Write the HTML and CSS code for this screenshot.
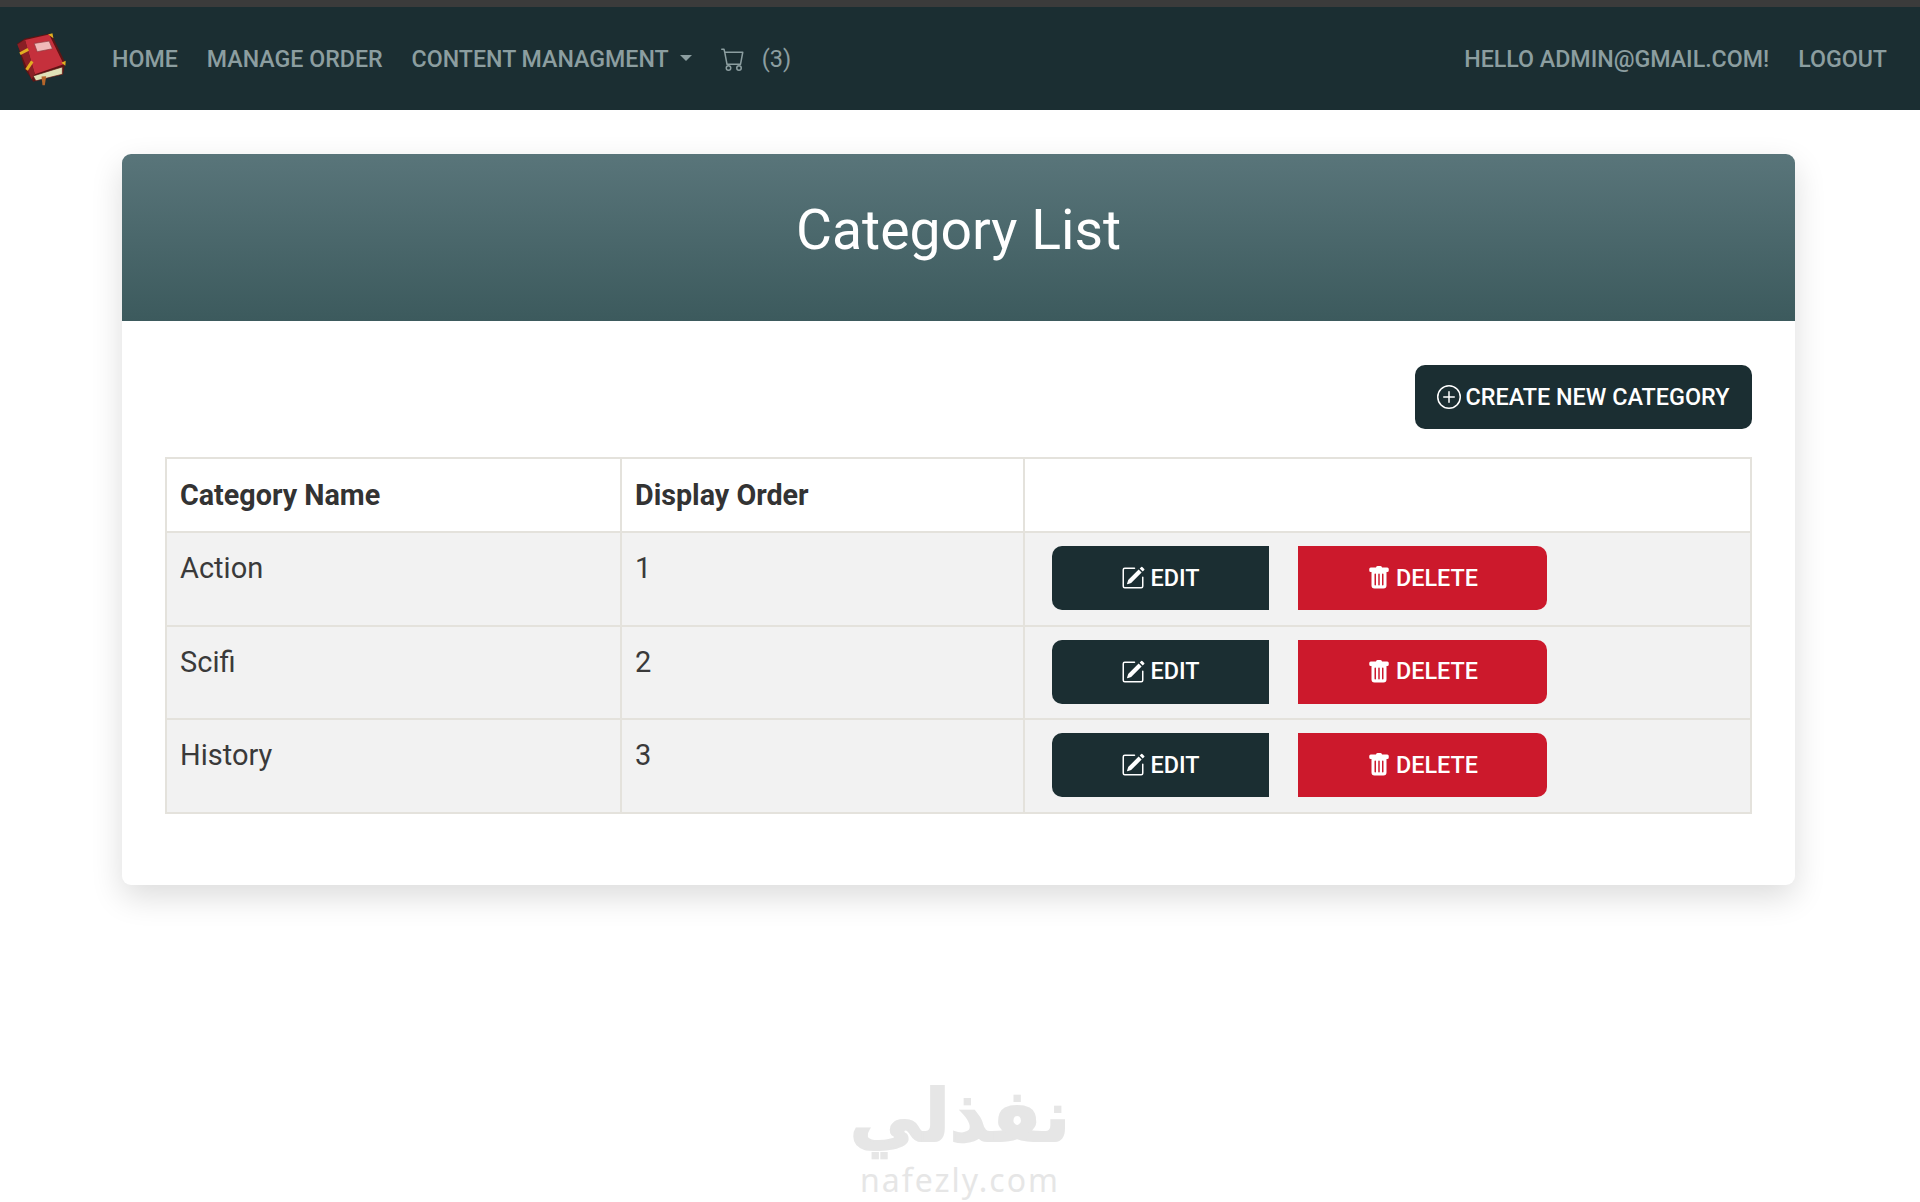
FILE: index.html
```html
<!DOCTYPE html>
<html lang="en">
<head>
<meta charset="utf-8">
<title>Category List</title>
<link rel="stylesheet" href="styles.css">
</head>
<body>
<div class="topline"></div>
<nav class="navbar">
  <svg class="logo" viewBox="45 38 160 165" width="53" height="55" aria-label="Book logo">
    <path d="M52 72 L75 57 L150 42 L160 55 L197 130 L190 165 L130 178 L100 188 L75 150 Z" fill="#5e1414"/>
    <path d="M75 62 L148 45 L192 135 L105 165 Z" fill="#c5303c"/>
    <path d="M52 75 L75 60 L105 165 L95 180 Z" fill="#8a1f25"/>
    <path d="M103 72 L148 65 L158 88 L112 97 Z" fill="#f0b8b8" stroke="#8a3a3e" stroke-width="2"/>
    <path d="M100 170 L188 143 L188 165 L108 185 Z" fill="#e0e2b8" stroke="#5e1414" stroke-width="2"/>
    <path d="M60 103 L85 90 M80 152 L97 126" stroke="#e0ae22" stroke-width="9" fill="none"/>
    <path d="M145 45 L158 41 L161 56 Z M185 130 L198 124 L197 139 Z" fill="#e0ae22"/>
    <path d="M125 172 L139 171 L135 198 L128 198 Z" fill="#b5662a"/>
  </svg>
  <ul class="nav-list">
    <li>HOME</li>
    <li>MANAGE ORDER</li>
    <li class="dropdown">CONTENT MANAGMENT<span class="caret"></span></li>
    <li class="cart">
      <svg viewBox="0 0 16 16" width="24" height="24" fill="currentColor"><path d="M0 1.5A.5.5 0 0 1 .5 1H2a.5.5 0 0 1 .485.379L2.89 3H14.5a.5.5 0 0 1 .491.592l-1.5 8A.5.5 0 0 1 13 12H4a.5.5 0 0 1-.491-.408L2.01 3.607 1.61 2H.5a.5.5 0 0 1-.5-.5zM3.102 4l1.313 7h8.17l1.313-7H3.102zM5 12a2 2 0 1 0 0 4 2 2 0 0 0 0-4zm7 0a2 2 0 1 0 0 4 2 2 0 0 0 0-4zm-7 1a1 1 0 1 1 0 2 1 1 0 0 1 0-2zm7 0a1 1 0 1 1 0 2 1 1 0 0 1 0-2z"/></svg>
      <span>(3)</span>
    </li>
  </ul>
  <ul class="nav-list nav-right">
    <li>HELLO ADMIN@GMAIL.COM!</li>
    <li>LOGOUT</li>
  </ul>
</nav>

<main class="card">
  <header class="card-head"><h1>Category List</h1></header>
  <section class="card-body">
    <div class="toolbar">
      <a class="btn btn-dark btn-create">
        <svg viewBox="0 0 16 16" width="24" height="24" fill="currentColor"><path d="M8 15A7 7 0 1 1 8 1a7 7 0 0 1 0 14zm0 1A8 8 0 1 0 8 0a8 8 0 0 0 0 16z"/><path d="M8 4a.5.5 0 0 1 .5.5v3h3a.5.5 0 0 1 0 1h-3v3a.5.5 0 0 1-1 0v-3h-3a.5.5 0 0 1 0-1h3v-3A.5.5 0 0 1 8 4z"/></svg>
        CREATE NEW CATEGORY
      </a>
    </div>
    <table class="table">
      <colgroup><col class="c1"><col class="c2"><col></colgroup>
      <thead>
        <tr><th>Category Name</th><th>Display Order</th><th></th></tr>
      </thead>
      <tbody>
        <tr>
          <td>Action</td><td>1</td>
          <td><div class="actions">
            <a class="btn btn-dark btn-edit"><svg viewBox="0 0 16 16" width="24" height="24" fill="currentColor"><path d="M15.502 1.94a.5.5 0 0 1 0 .706L14.459 3.69l-2-2L13.502.646a.5.5 0 0 1 .707 0l1.293 1.293zm-1.75 2.456-2-2L4.939 9.21a.5.5 0 0 0-.121.196l-.805 2.414a.25.25 0 0 0 .316.316l2.414-.805a.5.5 0 0 0 .196-.12l6.813-6.814z"/><path fill-rule="evenodd" d="M1 13.5A1.5 1.5 0 0 0 2.5 15h11a1.5 1.5 0 0 0 1.5-1.5v-6a.5.5 0 0 0-1 0v6a.5.5 0 0 1-.5.5h-11a.5.5 0 0 1-.5-.5v-11a.5.5 0 0 1 .5-.5H9a.5.5 0 0 0 0-1H2.500A1.500 1.500 0 0 0 1 2.500v11z"/></svg>EDIT</a>
            <a class="btn btn-red btn-delete"><svg viewBox="0 0 16 16" width="24" height="24" fill="currentColor"><path d="M2.500 1a1 1 0 0 0-1 1v1a1 1 0 0 0 1 1H3v9a2 2 0 0 0 2 2h6a2 2 0 0 0 2-2V4h.500a1 1 0 0 0 1-1V2a1 1 0 0 0-1-1H10a1 1 0 0 0-1-1H7a1 1 0 0 0-1 1H2.500zm3 4a.5.5 0 0 1 .5.5v7a.5.5 0 0 1-1 0v-7a.5.5 0 0 1 .5-.5zM8 5a.5.5 0 0 1 .5.5v7a.5.5 0 0 1-1 0v-7A.5.5 0 0 1 8 5zm3 .5v7a.5.5 0 0 1-1 0v-7a.5.5 0 0 1 1 0z"/></svg>DELETE</a>
          </div></td>
        </tr>
        <tr>
          <td>Scifi</td><td>2</td>
          <td><div class="actions">
            <a class="btn btn-dark btn-edit"><svg viewBox="0 0 16 16" width="24" height="24" fill="currentColor"><path d="M15.502 1.94a.5.5 0 0 1 0 .706L14.459 3.69l-2-2L13.502.646a.5.5 0 0 1 .707 0l1.293 1.293zm-1.75 2.456-2-2L4.939 9.21a.5.5 0 0 0-.121.196l-.805 2.414a.25.25 0 0 0 .316.316l2.414-.805a.5.5 0 0 0 .196-.12l6.813-6.814z"/><path fill-rule="evenodd" d="M1 13.5A1.5 1.5 0 0 0 2.5 15h11a1.5 1.5 0 0 0 1.5-1.5v-6a.5.5 0 0 0-1 0v6a.5.5 0 0 1-.5.5h-11a.5.5 0 0 1-.5-.5v-11a.5.5 0 0 1 .5-.5H9a.5.5 0 0 0 0-1H2.500A1.500 1.500 0 0 0 1 2.500v11z"/></svg>EDIT</a>
            <a class="btn btn-red btn-delete"><svg viewBox="0 0 16 16" width="24" height="24" fill="currentColor"><path d="M2.500 1a1 1 0 0 0-1 1v1a1 1 0 0 0 1 1H3v9a2 2 0 0 0 2 2h6a2 2 0 0 0 2-2V4h.500a1 1 0 0 0 1-1V2a1 1 0 0 0-1-1H10a1 1 0 0 0-1-1H7a1 1 0 0 0-1 1H2.500zm3 4a.5.5 0 0 1 .5.5v7a.5.5 0 0 1-1 0v-7a.5.5 0 0 1 .5-.5zM8 5a.5.5 0 0 1 .5.5v7a.5.5 0 0 1-1 0v-7A.5.5 0 0 1 8 5zm3 .5v7a.5.5 0 0 1-1 0v-7a.5.5 0 0 1 1 0z"/></svg>DELETE</a>
          </div></td>
        </tr>
        <tr>
          <td>History</td><td>3</td>
          <td><div class="actions">
            <a class="btn btn-dark btn-edit"><svg viewBox="0 0 16 16" width="24" height="24" fill="currentColor"><path d="M15.502 1.94a.5.5 0 0 1 0 .706L14.459 3.69l-2-2L13.502.646a.5.5 0 0 1 .707 0l1.293 1.293zm-1.75 2.456-2-2L4.939 9.21a.5.5 0 0 0-.121.196l-.805 2.414a.25.25 0 0 0 .316.316l2.414-.805a.5.5 0 0 0 .196-.12l6.813-6.814z"/><path fill-rule="evenodd" d="M1 13.5A1.5 1.5 0 0 0 2.5 15h11a1.5 1.5 0 0 0 1.5-1.5v-6a.5.5 0 0 0-1 0v6a.5.5 0 0 1-.5.5h-11a.5.5 0 0 1-.5-.5v-11a.5.5 0 0 1 .5-.5H9a.5.5 0 0 0 0-1H2.500A1.500 1.500 0 0 0 1 2.500v11z"/></svg>EDIT</a>
            <a class="btn btn-red btn-delete"><svg viewBox="0 0 16 16" width="24" height="24" fill="currentColor"><path d="M2.500 1a1 1 0 0 0-1 1v1a1 1 0 0 0 1 1H3v9a2 2 0 0 0 2 2h6a2 2 0 0 0 2-2V4h.500a1 1 0 0 0 1-1V2a1 1 0 0 0-1-1H10a1 1 0 0 0-1-1H7a1 1 0 0 0-1 1H2.500zm3 4a.5.5 0 0 1 .5.5v7a.5.5 0 0 1-1 0v-7a.5.5 0 0 1 .5-.5zM8 5a.5.5 0 0 1 .5.5v7a.5.5 0 0 1-1 0v-7A.5.5 0 0 1 8 5zm3 .5v7a.5.5 0 0 1-1 0v-7a.5.5 0 0 1 1 0z"/></svg>DELETE</a>
          </div></td>
        </tr>
      </tbody>
    </table>
  </section>
</main>

<footer class="watermark">
  <div class="wm-ar" lang="ar" dir="rtl">نفذلي</div>
  <div class="wm-en">nafezly.com</div>
</footer>
</body>
</html>
```

FILE: styles.css
```css
* { box-sizing: border-box; }
html, body { margin: 0; padding: 0; }
body {
  width: 1920px;
  height: 1202px;
  overflow: hidden;
  background: #fff;
  font-family: Roboto, "Liberation Sans", sans-serif;
  color: #333;
}
.topline { height: 7px; background: #3b3b3b; }
.navbar {
  height: 103px;
  background: #1b2e32;
  display: flex;
  align-items: center;
  padding: 0 33px 0 15px;
  color: #8c9ea0;
  font-size: 23.2px;
  font-weight: 500;
}
.logo { flex: none; margin-right: 44px; margin-top: 1px; }
.nav-list {
  list-style: none;
  margin: 0;
  padding: 0;
  display: flex;
  align-items: center;
  gap: 29px;
}
.nav-right { margin-left: auto; }
.dropdown { display: flex; align-items: center; }
.caret {
  width: 0;
  height: 0;
  margin-left: 11px;
  border-left: 6.5px solid transparent;
  border-right: 6.5px solid transparent;
  border-top: 6.5px solid #8c9ea0;
  margin-top: -2px;
}
.cart { display: flex; align-items: center; gap: 17px; font-weight: 400; font-size: 23.5px; }

.card {
  width: 1673px;
  height: 731px;
  margin: 44px 0 0 122px;
  border-radius: 9px;
  background: #fff;
  box-shadow: 0 12px 32px rgba(0, 0, 0, .14);
}
.card-head {
  height: 167px;
  border-radius: 9px 9px 0 0;
  background: linear-gradient(180deg, #59757a, #3c5a5d);
  display: flex;
  justify-content: center;
  padding-top: 45px;
}
.card-head h1 {
  margin: 0;
  color: #fff;
  font-size: 55.3px;
  font-weight: 400;
  line-height: 64px;
}
.card-body { padding: 44px 43px 0 43px; }
.toolbar { display: flex; justify-content: flex-end; margin-bottom: 28px; }

.btn {
  display: flex;
  align-items: center;
  justify-content: center;
  height: 64px;
  border-radius: 10px;
  color: #fff;
  font-size: 23.4px;
  font-weight: 500;
}
.btn-dark { background: #1b2e32; }
.btn-red { background: #cc192c; }
.btn-create { width: 337px; gap: 4px; }
.btn-edit { width: 217px; gap: 5px; border-radius: 10px 0 0 10px; }
.btn-delete { width: 249px; gap: 5px; border-radius: 0 10px 10px 0; }

.table {
  width: 1587px;
  border-collapse: collapse;
  table-layout: fixed;
  font-size: 29px;
}
.c1 { width: 455px; }
.c2 { width: 403px; }
.table th, .table td {
  border: 2px solid #e4e2dc;
  padding: 15px 13px;
  text-align: left;
  vertical-align: top;
  line-height: 41px;
}
.table th { font-weight: 700; font-size: 28.7px; height: 73px; padding-top: 16px; color: #333; }
.table td { height: 93.5px; font-weight: 400; color: #3a3a3a; }
.table td:last-child { padding: 13px 0 0 27px; }
.table tbody tr { background: #f2f2f2; }
.actions { display: flex; gap: 29px; }

.watermark {
  margin-top: 189px;
  text-align: center;
  color: #e6e6e6;
}
.wm-ar {
  font-family: "DejaVu Sans", sans-serif;
  font-size: 72px;
  font-weight: 700;
  line-height: 84px;
  -webkit-text-stroke: 2px #e6e6e6;
}
.wm-en {
  font-family: "Noto Sans", sans-serif;
  font-size: 32px;
  letter-spacing: 2px;
  line-height: 43px;
}
```
